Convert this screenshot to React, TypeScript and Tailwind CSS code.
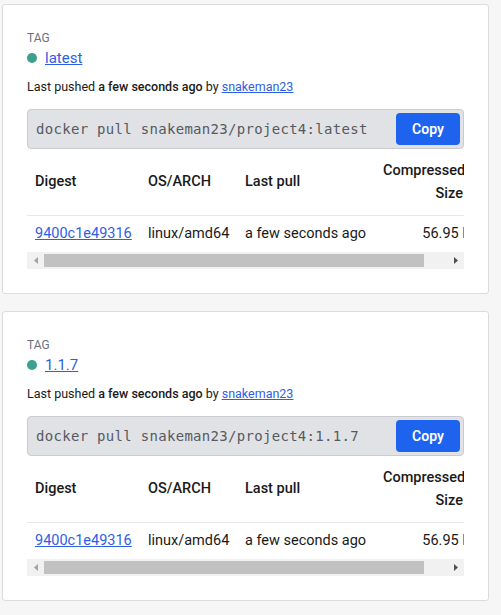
import React from "react";

const font = { fontFamily: "Roboto, 'Noto Sans', Arial, sans-serif" };

function ScrollBar() {
  return (
    <div className="flex w-[437px] h-[17px] bg-[#f1f1f1]">
      <div className="w-[17px] h-[17px] flex items-center justify-center">
        <svg width="4" height="7" viewBox="0 0 4 7">
          <path d="M4 0 L0 3.5 L4 7 Z" fill="#a3a3a3" />
        </svg>
      </div>
      <div className="flex-1 py-[2px]">
        <div className="w-[380px] h-full bg-[#c1c1c1]" />
      </div>
      <div className="w-[17px] h-[17px] flex items-center justify-center">
        <svg width="4" height="7" viewBox="0 0 4 7">
          <path d="M0 0 L4 3.5 L0 7 Z" fill="#505050" />
        </svg>
      </div>
    </div>
  );
}

function TagCard({ tag }: { tag: string }) {
  return (
    <div className="w-[487px] border border-[#dcdcdc] rounded-[3px] bg-white pt-[25px] pb-[24px] pl-[24px] pr-[23px]">
      <div className="text-[12px] leading-[16px] text-[#6b7080] uppercase">Tag</div>
      <div className="flex items-center mt-[1px] h-[22px]">
        <span className="w-[10px] h-[10px] rounded-full bg-[#3d9f8e] mr-[8px]" />
        <a href="#" className="text-[15px] leading-[22px] text-[#2f5ee6] underline">{tag}</a>
      </div>
      <div className="mt-[10px] text-[12.5px] leading-[16px] text-[#1a1a1a]">
        Last pushed <span className="font-medium">a few seconds ago</span> by{" "}
        <a href="#" className="text-[#2f5ee6] underline">snakeman23</a>
      </div>
      <div className="mt-[14px] w-[437px] h-[40px] flex items-center justify-between bg-[#e1e2e6] border border-[#c9cbd0] rounded-[4px] pl-[8px] pr-[3px]">
        <span
          className="text-[14px] tracking-[0.3px] text-[#555a60]"
          style={{ fontFamily: "'DejaVu Sans Mono', 'Liberation Mono', monospace" }}
        >
          docker pull snakeman23/project4:{tag}
        </span>
        <button className="w-[64px] h-[32px] rounded-[4px] bg-[#1d63ed] text-white text-[14px] font-semibold">
          Copy
        </button>
      </div>
      <div className="w-[437px] overflow-hidden">
        <table className="w-[463px] table-fixed border-collapse text-[14.5px] text-[#1a1a1a]">
          <colgroup>
            <col className="w-[113px]" />
            <col className="w-[97px]" />
            <col className="w-[138px]" />
            <col className="w-[115px]" />
          </colgroup>
          <thead>
            <tr className="border-b border-[#e8e8e8]">
              <th className="text-left font-medium px-[8px] h-[66px]">Digest</th>
              <th className="text-left font-medium px-[8px]">OS/ARCH</th>
              <th className="text-left font-medium px-[8px]">Last pull</th>
              <th className="text-right font-medium pl-[8px] pr-[27px] leading-[23px]">Compressed Size</th>
            </tr>
          </thead>
          <tbody>
            <tr>
              <td className="px-[8px] h-[37px]">
                <a href="#" className="text-[#2f5ee6] underline">9400c1e49316</a>
              </td>
              <td className="px-[8px]">linux/amd64</td>
              <td className="px-[8px]">a few seconds ago</td>
              <td className="pl-[8px] pr-[6px] text-right whitespace-nowrap">56.95 MB</td>
            </tr>
          </tbody>
        </table>
      </div>
      <ScrollBar />
    </div>
  );
}

export default function App() {
  return (
    <div className="min-h-[615px] w-[501px] bg-[#f6f6f6] pl-[2px] pt-[4px]" style={font}>
      <div className="flex flex-col gap-[17px]">
        <TagCard tag="latest" />
        <TagCard tag="1.1.7" />
      </div>
    </div>
  );
}
